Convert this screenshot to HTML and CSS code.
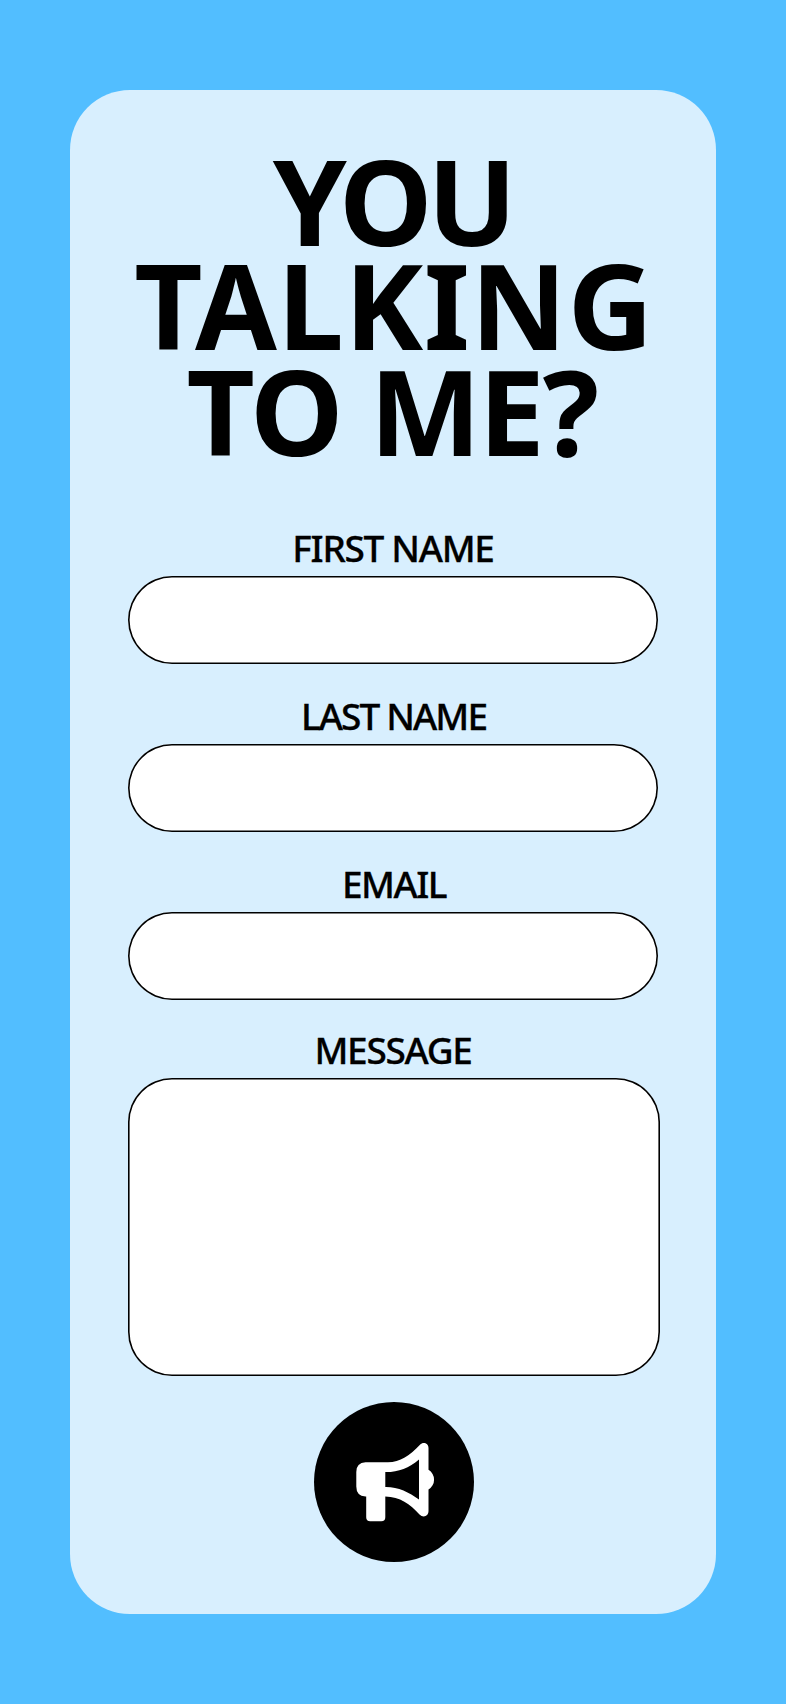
FILE: index.html
```html
<!DOCTYPE html>
<html lang="en">
<head>
<meta charset="utf-8">
<title>You talking to me?</title>
<link rel="stylesheet" href="styles.css">
</head>
<body>
<main class="card">
  <h1 class="title"><span class="line line-you">YOU</span><span class="line line-talking">TALKING</span><span class="line line-tome">TO ME?</span></h1>
  <form class="form">
    <div class="field"><label class="label label-first" for="first">FIRST NAME</label><input class="input" id="first" type="text"></div>
    <div class="field"><label class="label label-last" for="last">LAST NAME</label><input class="input" id="last" type="text"></div>
    <div class="field field-email"><label class="label label-email" for="email">EMAIL</label><input class="input" id="email" type="text"></div>
    <div class="field"><label class="label label-message" for="message">MESSAGE</label><textarea class="input message" id="message"></textarea></div>
    <button class="send" type="button" aria-label="Send">
      <svg class="icon" viewBox="0 0 160 160">
        <path fill="#fff" fill-rule="evenodd" d="M51.500 60.300H74C86 60 96 53.500 106 42.700C109 39.500 114.500 41 114.500 46V67.800A11.500 11.500 0 0 1 114.500 87.500V109C114.500 114.500 109 116 105.500 112.500C96 102 86 94.700 71.300 94.500V115.300Q71.300 119.300 67.300 119.300H56.200Q52.200 119.300 52.200 115.300V94.500H51.500Q42.300 94 42.300 84.500V70Q42.300 60.800 51.500 60.300ZM71.300 70.100V84.900C84 84.700 95 90 105 97.500V57.500C95 66 84 70.300 71.300 70.100Z"/>
      </svg>
    </button>
  </form>
</main>
</body>
</html>
```
FILE: styles.css
```css
* { box-sizing: border-box; }

body {
  margin: 0;
  min-height: 1704px;
  padding: 90px 70px;
  background: #52beff;
  color: #000;
  font-family: "Noto Sans", sans-serif;
}

.card {
  height: 1524px;
  padding: 58px 56px 0 58px;
  border-radius: 60px;
  background: #d8effe;
}

.title {
  margin: 0;
  font-size: 118.4px;
  font-weight: 700;
  line-height: 105px;
  text-align: center;
}

.line { display: block; white-space: nowrap; }
.line-you { padding-right: 4px; letter-spacing: -5.5px; }
.line-talking { margin-top: -1px; letter-spacing: 0.7px; }
.line-tome { margin-top: 1px; padding-right: 5px; letter-spacing: -2.5px; }

.form {
  display: flex;
  flex-direction: column;
  padding-top: 65px;
}

.field {
  display: flex;
  flex-direction: column;
  margin-bottom: 32px;
}

.field-email { margin-bottom: 30px; }

.label {
  margin-bottom: 8px;
  font-size: 37px;
  font-weight: 500;
  line-height: 40px;
  text-align: center;
  -webkit-text-stroke: 0.3px #000;
}

.label-first { padding-right: 2px; letter-spacing: -1.3px; }
.label-last { padding-right: 1px; letter-spacing: -1.9px; }
.label-email { letter-spacing: -1.5px; }
.label-message { padding-right: 2px; letter-spacing: -1.3px; }

.input {
  width: 530px;
  height: 88px;
  padding: 0 40px;
  border: 0;
  border-radius: 44px;
  background: #fff;
  box-shadow: inset 0 0 0 1.6px #000;
  font: 32px "Noto Sans", sans-serif;
  outline: none;
}

.message {
  width: 532px;
  height: 298px;
  padding: 30px 40px;
  resize: none;
}

.send {
  align-self: center;
  width: 160px;
  height: 160px;
  margin-top: -6px;
  padding: 0;
  border: 0;
  border-radius: 50%;
  background: #000;
}

.icon { display: block; width: 160px; height: 160px; }
```
